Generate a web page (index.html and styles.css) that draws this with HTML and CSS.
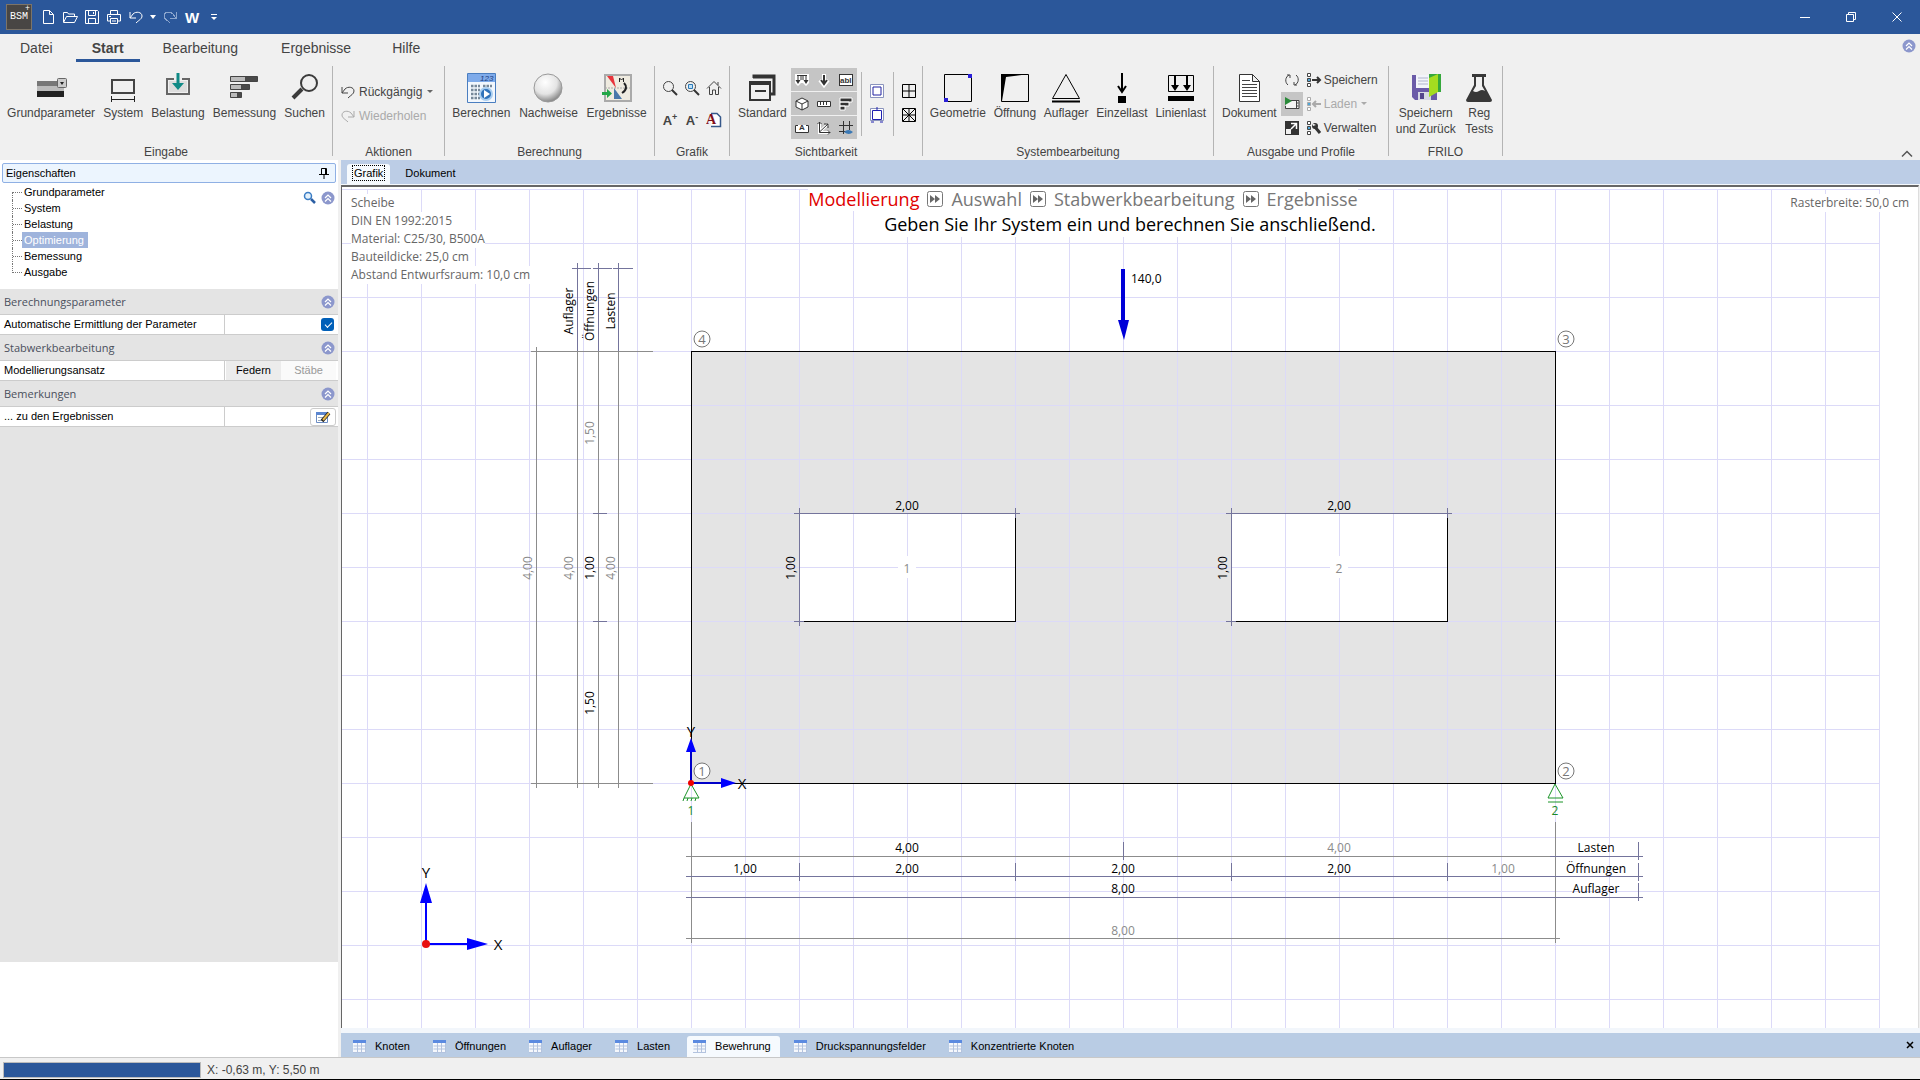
FILE: index.html
```
<!DOCTYPE html>
<html lang="de">
<head>
  <meta charset="utf-8">
  <title>BSM+</title>
  <link rel="stylesheet" href="styles.css">
</head>
<body>
  <!-- shared icons -->
  <svg class="sprite" aria-hidden="true">
    <symbol id="i-undo" viewBox="0 0 16 16"><path d="M2 3v6h6M2 9l3-4c3-3 9-2 9 2 0 3-3 4-6 7" fill="none" stroke="currentColor"/></symbol>
    <symbol id="i-redo" viewBox="0 0 16 16"><path d="M14 3v6H8M14 9l-3-4C8 2 2 3 2 7c0 3 3 4 6 7" fill="none" stroke="currentColor"/></symbol>
    <symbol id="i-up" viewBox="0 0 14 14"><circle cx="7" cy="7" r="6.500" fill="#8c97cc"/><path d="M4 7l3-3 3 3M4 10.500l3-3 3 3" fill="none" stroke="#fff" stroke-width="1.200"/></symbol>
    <symbol id="i-table" viewBox="0 0 14 14"><path d="M0 1h13v12H0z" fill="#f6f8fc"/><path d="M0 1h13v3H0z" fill="#5b8ae0"/><path d="M.5 7h12M.5 10h12M4.500 4v9M8.500 4v9M12.500 4v9M0 13.500h13" stroke="#b3c3de" fill="none"/></symbol>
    <symbol id="i-ff" viewBox="0 0 16 16"><rect x=".5" y=".5" width="15" height="15" rx="2" fill="#fff" stroke="#777"/><path d="M3 4l5 4-5 4zM8 4l5 4-5 4z" fill="#666"/></symbol>
    <symbol id="i-profile" viewBox="0 0 16 16"><path d="M1.500 1.500h3v3h-3zM1.500 11.500h3v3h-3z" fill="#fff" stroke="currentColor"/><path d="M1.500 6.500h3v3h-3z" fill="#4ea6d8" stroke="currentColor"/></symbol>
  </svg>

  <header class="titlebar">
    <div class="app-icon"><span>BSM</span><sup>+</sup></div>
    <div class="quick">
      <button aria-label="Neu"><svg width="16" height="16"><path d="M3.500 1.500h6l4 4v9h-10zM9.500 1.500v4h4" class="w"/></svg></button>
      <button aria-label="Öffnen"><svg width="16" height="16"><path d="M1.500 13V3.500h4l1 1.500h6v2.500M1.500 13.500l3-6h11l-3 6z" class="w"/></svg></button>
      <button aria-label="Speichern"><svg width="16" height="16"><path d="M1.500 1.500h12l1 1v12h-13zM4.500 1.500v5h7v-5M4.500 14.500v-5h7v5M9.500 3v2" class="w"/></svg></button>
      <button aria-label="Drucken"><svg width="16" height="16"><path d="M4.500 5V1.500h7V5M4.500 12h-3V5.500h13V12h-3M4.500 9.500h7v5h-7zM6 12h4M3 7.500h2" class="w"/></svg></button>
      <button aria-label="Rückgängig"><svg width="16" height="16"><use href="#i-undo"/></svg></button>
      <button class="slim" aria-label="Rückgängig-Liste"><svg width="6" height="4"><path d="M0 0h6L3 4z" fill="#fff"/></svg></button>
      <button class="dim" aria-label="Wiederholen"><svg width="16" height="16"><use href="#i-redo"/></svg></button>
      <button class="word">W</button>
      <button aria-label="Anpassen"><svg width="8" height="8"><path d="M1 1.500h6" stroke="#fff"/><path d="M1 4h6L4 7z" fill="#fff"/></svg></button>
    </div>
    <div class="window-buttons">
      <button aria-label="Minimieren"><svg width="12" height="12"><path d="M1 6.500h10" class="w"/></svg></button>
      <button aria-label="Wiederherstellen"><svg width="12" height="12"><path d="M1.500 3.500h7v7h-7zM3.500 3V1.500h7v7H9" class="w"/></svg></button>
      <button aria-label="Schließen"><svg width="12" height="12"><path d="M1.500 1.500l9 9M10.500 1.500l-9 9" class="w"/></svg></button>
    </div>
  </header>

  <nav class="menu">
    <button>Datei</button>
    <button class="active">Start</button>
    <button>Bearbeitung</button>
    <button class="wide">Ergebnisse</button>
    <button>Hilfe</button>
    <svg class="menu-up" width="14" height="14"><use href="#i-up"/></svg>
  </nav>

  <section class="ribbon">
    <div class="group g-eingabe">
      <div class="tools">
        <button class="big"><svg width="32" height="32"><path d="M2 9h27v6H2z" fill="#777"/><path d="M2 14h27v5H2z" fill="#bbb"/><path d="M2 19h27v6H2z" fill="#222"/><rect x="22.500" y="6.500" width="9" height="9" rx="1" fill="#ccc" stroke="#666"/><path d="M25 10h4l-2 3z" fill="#222"/></svg>Grundparameter</button>
        <button class="big"><svg width="32" height="32"><path d="M5 8h22v13H5z" fill="none" stroke="#444" stroke-width="2"/><path d="M4 27.500h24M4.500 24v6M27.500 24v6" stroke="#222"/></svg>System</button>
        <button class="big"><svg width="32" height="32"><path d="M12 7H5v15h22V7h-7" fill="none" stroke="#666" stroke-width="2"/><path d="M7 9h18v11H7z" fill="#ddd"/><path d="M14.500 1h3v10h4.500l-6 7-6-7h4.500z" fill="#108a86"/></svg>Belastung</button>
        <button class="big"><svg width="32" height="32"><path d="M2.500 4.500h27v5h-27zM2.500 12.500h19v5h-19zM2.500 20.500h11v5h-11z" fill="#4a4a4a" stroke="#444"/><path d="M3 5h14v4H3zM3 13h10v4H3zM3 21h6v4H3z" fill="#bbb"/></svg>Bemessung</button>
        <button class="big"><svg width="32" height="32"><circle cx="20" cy="11" r="8" fill="none" stroke="#3b3b3b" stroke-width="2"/><path d="M13 17L4 26" stroke="#3b3b3b" stroke-width="4"/></svg>Suchen</button>
      </div>
      <div class="caption">Eingabe</div>
    </div>

    <div class="group g-aktionen">
      <div class="tools rows">
        <button class="row"><svg width="16" height="16"><use href="#i-undo"/></svg>Rückgängig<svg class="caret" width="6" height="4"><path d="M0 0h6L3 3z" fill="#666"/></svg></button>
        <button class="row" disabled><svg width="16" height="16"><use href="#i-redo"/></svg>Wiederholen</button>
      </div>
      <div class="caption">Aktionen</div>
    </div>

    <div class="group g-berechnung">
      <div class="tools">
        <button class="big"><svg width="32" height="32"><path d="M2.500 1.500h28v29h-28z" fill="#f2f7fd" stroke="#4a7ec0"/><path d="M3 2h27v8H3z" fill="#7fabea"/><text x="15" y="9" class="num">123</text><path d="M6 14h9M6 18h9M6 22h9M6 26h9M18 14h9" stroke="#789" stroke-width="2.500" stroke-dasharray="2.500 1"/><circle cx="21" cy="22" r="6" fill="#2e72ba" stroke="#a8cdf0" stroke-width="2"/><path d="M19 18l6 4-6 4z" fill="#fff"/></svg>Berechnen</button>
        <button class="big"><svg width="32" height="32"><defs><radialGradient id="ball" cx=".4" cy=".3" r=".7"><stop offset="0" stop-color="#fff"/><stop offset=".6" stop-color="#e4e4e4"/><stop offset="1" stop-color="#888"/></radialGradient></defs><circle cx="16" cy="16" r="14" fill="url(#ball)" stroke="#999"/></svg>Nachweise</button>
        <button class="big"><svg width="32" height="32"><path d="M4 3h26v26H4z" fill="#efebe0" stroke="#aaa" stroke-width="2"/><path d="M4 16h26" stroke="#aaa" stroke-dasharray="2 1"/><path d="M6 4h6l3 12z" fill="#e8343c"/><path d="M13 16l8 11h-8z" fill="#4a78aa"/><path d="M23 11c3 3 3 7-2 10" fill="none" stroke="#222" stroke-width="2"/><path d="M18.500 10V6l2 2 2-2v4" fill="none" stroke="#222"/><path d="M1 20h5v-3l5 4.500-5 4.500v-3H1z" fill="#23a648"/></svg>Ergebnisse</button>
      </div>
      <div class="caption">Berechnung</div>
    </div>

    <div class="group g-grafik">
      <div class="tools icon-grid zoom-grid">
        <button aria-label="Zoom"><svg width="16" height="16"><circle cx="6.500" cy="6.500" r="5" class="k"/><path d="M10 10l5 5" class="k2"/></svg></button>
        <button aria-label="Zoom Fenster"><svg width="16" height="16"><circle cx="6.500" cy="6.500" r="5" class="k"/><path d="M10 10l5 5" class="k2"/><path d="M4.500 4.500h4v4h-4z" fill="#bfe0f5" stroke="#2a7ab8"/></svg></button>
        <button aria-label="Vollbild"><svg width="16" height="16"><path d="M1 8.500L8 1.500l7 7M3.500 7v7.500h3V10h3v4.500h3V7M12 5V2" class="k"/></svg></button>
        <button class="font">A<sup>+</sup></button>
        <button class="font">A<sup>-</sup></button>
        <button aria-label="Schrift"><svg width="16" height="16"><path d="M5 1.500h6l3.500 3.500v9.500H5" fill="#fff" stroke="#36588a" stroke-width="1.500"/><text x="0" y="12" class="red-a">A</text></svg></button>
      </div>
      <div class="caption">Grafik</div>
    </div>

    <div class="group g-sicht">
      <div class="tools">
        <button class="big"><svg width="32" height="32"><path d="M7 2h22v20H7z" fill="#f0f0f0"/><path d="M8 6V4h20v18h-3M7 5h21" fill="none" stroke="#333" stroke-width="3"/><path d="M4 10h20v18H4z" fill="#f0f0f0" stroke="#333" stroke-width="2"/><path d="M3 11h22" stroke="#333" stroke-width="4"/><path d="M9 19h11" stroke="#333" stroke-width="2"/></svg>Standard</button>
        <div class="toggles">
          <button aria-label="Lasten"><svg width="16" height="16"><path d="M1 2h14v9l-3 3-3-3H7l-3 3-3-3z" fill="#fff"/><path d="M3 3.500h10M4 3v7M12 3v7M7 4v4M9 4v4" class="t"/><path d="M1.500 8h5L4 12zM9.500 8h5L12 12z" fill="#333"/></svg></button>
          <button aria-label="Einzellasten"><svg width="16" height="16"><path d="M8 2v10M4 8l4 5 4-5" fill="none" stroke="#fff" stroke-width="4"/><path d="M8 3v8M5 8l3 4 3-4" class="t t2"/></svg></button>
          <button aria-label="Texte"><svg width="16" height="16"><rect x="1.500" y="2.500" width="13" height="11" fill="#fff" stroke="#333"/><text x="2" y="11" class="abl">abl</text></svg></button>
          <button aria-label="3D"><svg width="16" height="16"><path d="M8 2l6 3v6l-6 3-6-3V5z" fill="#fff"/><path d="M8 2l6 3v6l-6 3-6-3V5zM2 5l6 3 6-3M8 8v6" class="t"/></svg></button>
          <button aria-label="Bemaßung"><svg width="16" height="16"><path d="M1 5h14v6H1z" fill="#fff"/><path d="M1.500 5.500h13v5h-13zM4.500 6v3M7.500 6v3M10.500 6v3" class="t"/></svg></button>
          <button aria-label="Tabelle"><svg width="16" height="16"><path d="M2 2h12v4H2zM2 6h9v4H2zM2 10h5v4H2z" fill="#333" stroke="#fff"/></svg></button>
          <button aria-label="Beschriftung"><svg width="16" height="16"><path d="M1 5h14v8H1z" fill="#fff"/><path d="M4 5.500H1.500v7h13v-7H12" class="t"/><text x="5" y="10" class="abl">A</text></svg></button>
          <button aria-label="Achsen"><svg width="16" height="16"><path d="M3.500 2v10.500H14M3.500 12L12 4" fill="none" stroke="#fff" stroke-width="3"/><path d="M3.500 2v10.500H14M3.500 12L12 4M1.500 4l2-2 2 2M12 10.500l2 2-2 2M8 4h4v4" class="t"/></svg></button>
          <button aria-label="Raster"><svg width="16" height="16"><path d="M5.500 1v13M11.500 1v9M1 5.500h14M1 11.500h7" class="t"/><path d="M6 12q4-4 9 0-4 4-9 0z" fill="#3a78b4"/></svg></button>
        </div>
        <div class="pair">
          <button aria-label="System zoomen"><svg width="16" height="16"><path d="M1.500 1.500h13v13h-13z" fill="#fff" stroke="#8a93bd"/><path d="M4 4h8v8H4z" fill="none" stroke="#2020a0"/></svg></button>
          <button aria-label="Lager zoomen"><svg width="16" height="16"><path d="M1.500 1.500h13v12h-13z" fill="#fff" stroke="#8a93bd"/><path d="M3.500 3.500h9v9h-9zM8 0v4M2 15h3M11 15h3" fill="none" stroke="#2020b0"/></svg></button>
        </div>
        <div class="pair">
          <button aria-label="Raster an"><svg width="16" height="16"><path d="M1.500 1.500h13v13h-13zM8 1v14M1 8h14" class="b"/></svg></button>
          <button aria-label="Netz an"><svg width="16" height="16"><path d="M1.500 1.500h13v13h-13zM8 1v14M1 8h14M2 2l12 12M14 2L2 14" class="b"/></svg></button>
        </div>
      </div>
      <div class="caption">Sichtbarkeit</div>
    </div>

    <div class="group g-system">
      <div class="tools">
        <button class="big"><svg width="32" height="32"><path d="M2.500 2.500h27v27h-27z" class="b"/><path d="M26 2h4v4h-4zM2 26h4v4H2z" fill="#2a20d8"/></svg>Geometrie</button>
        <button class="big"><svg width="32" height="32"><path d="M2.500 2.500h27v27h-27z" class="b"/><path d="M2 2h28L7 5 3 29z"/></svg>Öffnung</button>
        <button class="big"><svg width="32" height="32"><path d="M2.500 26.500L16 2.500l13.500 24z" class="b"/><path d="M2 29.500h28" stroke="#000" stroke-width="2"/></svg>Auflager</button>
        <button class="big"><svg width="32" height="32"><path d="M16 1v18M12 14l4 6 4-6" fill="none" stroke="#000" stroke-width="2"/><path d="M12 24h8v7h-8z"/></svg>Einzellast</button>
        <button class="big"><svg width="32" height="32"><path d="M3.500 3.500h25v16h-25z" class="b"/><path d="M10 4v12M22 4v12" stroke="#000" stroke-width="2"/><path d="M6 13h8l-4 6zM18 13h8l-4 6z"/><path d="M3 24h26v5H3z"/></svg>Linienlast</button>
      </div>
      <div class="caption">Systembearbeitung</div>
    </div>

    <div class="group g-ausgabe">
      <div class="tools">
        <button class="big"><svg width="32" height="32"><path d="M6.500 2.500h13l7 7v20h-20zM19.500 2.500v7h7" fill="#fff" stroke="#333"/><path d="M9 8.500h8M9 12.500h15M9 15.500h15M9 18.500h15M9 21.500h15M9 24.500h15" stroke="#444"/></svg>Dokument</button>
        <div class="stack">
          <button aria-label="Aktualisieren"><svg width="16" height="16"><path d="M4 13A6 6 0 0 1 5 3M12 3a6 6 0 0 1-1 10M3 3h3v3M13 13h-3v-3" class="k"/></svg></button>
          <button class="on" aria-label="Vorschau"><svg width="16" height="16"><path d="M2 4h13v9H2z" fill="#f4f4f4"/><path d="M6 4.500h9v8H1.500V10M12.500 5v7M12.500 7h2M12.500 10h2" class="k"/><path d="M1 1l7 4-7 4z" fill="#2a8a3a"/></svg></button>
          <button aria-label="Fenster"><svg width="16" height="16"><path d="M1 1h14v14H1z" fill="#333"/><path d="M2 9h5v5H2z" fill="#f0f0f0"/><path d="M7 3.500h5.500V9M12 4L7 9" fill="none" stroke="#fff" stroke-width="1.500"/></svg></button>
        </div>
        <div class="profile">
          <button class="row"><svg width="16" height="16"><use href="#i-profile"/><path d="M6 8h8M11 5l3 3-3 3" class="k2"/></svg>Speichern</button>
          <button class="row" disabled><svg width="16" height="16"><use href="#i-profile"/><path d="M15 8H7M10 5L7 8l3 3" fill="none" stroke="#aaa" stroke-width="2"/></svg>Laden<svg class="caret" width="6" height="4"><path d="M0 0h6L3 3z" fill="#aaa"/></svg></button>
          <button class="row"><svg width="16" height="16"><use href="#i-profile"/><path d="M9 7l5 6" stroke="#333" stroke-width="3"/><circle cx="9" cy="6" r="3" fill="#333"/><path d="M6 3l4 2-3 1z" fill="#f0f0f0"/></svg>Verwalten</button>
        </div>
      </div>
      <div class="caption">Ausgabe und Profile</div>
    </div>

    <div class="group g-frilo">
      <div class="tools">
        <button class="big"><svg width="32" height="32"><path d="M2 3h25v25H5l-3-3z" fill="#6a5aa8"/><path d="M6 3h15v13H6z" fill="#f2f4fa"/><path d="M8 6h10M8 9h10M8 12h10" stroke="#b0b4cc"/><path d="M8 20h13v8H8z" fill="#d6d8e4"/><path d="M10 21h4v6h-4z" fill="#53458c"/><path d="M19 2h12v18h-12z" fill="#35a83c"/><path d="M19 6l9-4v18l-9 5z" fill="#a4dc20"/></svg>Speichern<br>und Zurück</button>
        <button class="big"><svg width="32" height="32"><path d="M9 2h14v3h-2v8l8 15q0 2-2 2H5q-2 0-2-2l8-15V5H9z" fill="#383838"/><path d="M13 5h6v9l3 5q-3-2-6 0t-6 0l3-5z" fill="#f0f0f0"/></svg>Reg<br>Tests</button>
      </div>
      <div class="caption">FRILO</div>
    </div>
    <svg class="ribbon-fold" width="12" height="8"><path d="M1 6.500l5-5 5 5" fill="none" stroke="#555" stroke-width="1.500"/></svg>
  </section>

  <main>
    <aside>
      <div class="panel-title">Eigenschaften<svg width="12" height="12"><path d="M3.500 7V1.500h5V7M1 7.500h10M6 8v4M7.500 2v5" fill="none" stroke="#000"/></svg></div>
      <div class="tree-box">
        <ul class="tree">
          <li><a href="#">Grundparameter</a></li>
          <li><a href="#">System</a></li>
          <li><a href="#">Belastung</a></li>
          <li><a href="#" class="selected">Optimierung</a></li>
          <li><a href="#">Bemessung</a></li>
          <li><a href="#">Ausgabe</a></li>
        </ul>
        <div class="tree-tools">
          <svg width="14" height="14"><circle cx="5" cy="5" r="3.500" fill="#e4f1fb" stroke="#3a7cc4" stroke-width="1.500"/><path d="M8 8l4 4" stroke="#2b5fa4" stroke-width="2.500"/></svg>
          <svg width="14" height="14"><use href="#i-up"/></svg>
        </div>
      </div>

      <div class="props">
        <h2>Berechnungsparameter<svg width="14" height="14"><use href="#i-up"/></svg></h2>
        <div class="prop">
          <label for="auto">Automatische Ermittlung der Parameter</label>
          <div class="value"><input type="checkbox" id="auto" checked></div>
        </div>
        <h2>Stabwerkbearbeitung<svg width="14" height="14"><use href="#i-up"/></svg></h2>
        <div class="prop">
          <span>Modellierungsansatz</span>
          <div class="value switch"><button class="on">Federn</button><button>Stäbe</button></div>
        </div>
        <h2>Bemerkungen<svg width="14" height="14"><use href="#i-up"/></svg></h2>
        <div class="prop">
          <span>... zu den Ergebnissen</span>
          <div class="value"><button class="edit" aria-label="Bearbeiten"><svg width="16" height="14"><path d="M1.500 2.500h11v10h-11z" fill="#fff" stroke="#6b8cc4"/><path d="M1 2h12v3H1z" fill="#5b86d0"/><path d="M3 7.500h6M3 10.500h5" stroke="#9ab"/><path d="M7 11l7-8" stroke="#222" stroke-width="3.500"/><path d="M8 10l6-7" stroke="#e8b84a" stroke-width="2"/></svg></button></div>
        </div>
      </div>
      <div class="help-box"></div>
    </aside>

    <div class="work">
      <div class="view-tabs">
        <button class="active"><span>Grafik</span></button>
        <button>Dokument</button>
      </div>

      <div class="canvas">
        <svg class="drawing" width="100%" height="100%">
          <defs>
            <pattern id="grid" width="54" height="54" patternUnits="userSpaceOnUse">
              <path d="M0 0h54v1H1v53H0z" fill="#dcdaf8"/>
            </pattern>
          </defs>
          <!-- origin is node 1, one grid cell (50 cm) is 54 units -->
          <g transform="translate(349 596)">
            <rect x="0" y="-432" width="864" height="432" fill="#e4e4e4"/>
            <rect x="108" y="-270" width="216" height="108" fill="#fff"/>
            <rect x="540" y="-270" width="216" height="108" fill="#fff"/>
            <rect x="-378" y="-594" width="1567" height="1400" fill="url(#grid)"/>
            <rect x="207" y="-227" width="18" height="22" fill="#fff"/>
            <rect x="639" y="-227" width="18" height="22" fill="#fff"/>
            <g class="outline">
              <rect x="0" y="-432" width="864" height="432"/>
              <path d="M108-162h216v-108M540-162h216v-108"/>
            </g>

            <!-- openings -->
            <path class="dim blue" d="M103-270h226M108-275v118M324-275v10M103-162h10M535-270h226M540-275v118M756-275v10M535-162h10"/>
            <g class="txt">
              <text x="216" y="-273">2,00</text>
              <text x="648" y="-273">2,00</text>
              <text transform="translate(104 -215) rotate(-90)">1,00</text>
              <text transform="translate(536 -215) rotate(-90)">1,00</text>
              <text class="grey" x="216" y="-210">1</text>
              <text class="grey" x="648" y="-210">2</text>
            </g>

            <!-- dimension chains left -->
            <path class="dim" d="M-155-436V5M-114-432V5M-93-432V5M-73-432V5M-160-432h122M-160 0h122"/>
            <path class="dim blue" d="M-114-520v88M-93-520v88M-73-520v88M-119-515h19M-98-515h19M-78-515h20M-98-270h14M-98-162h14"/>
            <g class="txt">
              <text transform="translate(-118 -472) rotate(-90)">Auflager</text>
              <text transform="translate(-97 -472) rotate(-90)">Öffnungen</text>
              <text transform="translate(-76 -472) rotate(-90)">Lasten</text>
              <text class="grey" transform="translate(-159 -215) rotate(-90)">4,00</text>
              <text class="grey" transform="translate(-118 -215) rotate(-90)">4,00</text>
              <text class="grey" transform="translate(-76 -215) rotate(-90)">4,00</text>
              <text class="grey" transform="translate(-97 -350) rotate(-90)">1,50</text>
              <text transform="translate(-97 -215) rotate(-90)">1,00</text>
              <text transform="translate(-97 -80) rotate(-90)">1,50</text>
            </g>

            <!-- dimension chains bottom -->
            <path class="dim" d="M0 39v121M864 39v121M-5 73h864M-5 155h874"/>
            <path class="dim blue" d="M-5 93h957M-5 114h957M859 73h93M432 59v18M108 80v18M324 80v18M540 80v18M756 80v18M947 59v18M947 80v18M947 100v18"/>
            <g class="txt">
              <text x="216" y="69">4,00</text>
              <text class="grey" x="648" y="69">4,00</text>
              <text x="54" y="90">1,00</text>
              <text x="216" y="90">2,00</text>
              <text x="432" y="90">2,00</text>
              <text x="648" y="90">2,00</text>
              <text class="grey" x="812" y="90">1,00</text>
              <text x="432" y="110">8,00</text>
              <text class="grey" x="432" y="152">8,00</text>
              <text x="905" y="69">Lasten</text>
              <text x="905" y="90">Öffnungen</text>
              <text x="905" y="110">Auflager</text>
            </g>

            <!-- point load -->
            <path d="M430-514h4v51h4l-5 20-6-20h3z" fill="#0000d8"/>
            <text class="txt start" x="440" y="-500">140,0</text>

            <!-- nodes -->
            <g class="node">
              <circle cx="11" cy="-12" r="8"/><text x="11" y="-7">1</text>
              <circle cx="875" cy="-12" r="8"/><text x="875" y="-7">2</text>
              <circle cx="875" cy="-444" r="8"/><text x="875" y="-439">3</text>
              <circle cx="11" cy="-444" r="8"/><text x="11" y="-439">4</text>
            </g>

            <!-- supports -->
            <g class="support">
              <path d="M0 1L-7 15H8zM-7 15l-1 3M-3 15l-1 3M1 15l-1 3M5 15l-1 3M864 1l-7 14h15zM857 19h15"/>
              <text x="0" y="32">1</text>
              <text x="864" y="32">2</text>
            </g>

            <!-- local axes -->
            <path d="M0 0v-36M0 0h36" stroke="#0000c8" stroke-width="2"/>
            <path d="M-5-31H5L0-45zM30-5v10l15-5z" fill="#00f"/>
            <circle r="3" fill="#e00"/>
            <text class="axis" x="0" y="-46">Y</text>
            <text class="axis" x="51" y="6">X</text>

            <!-- coordinate cross -->
            <path d="M-265 161v-46M-265 161h48" stroke="#00f" stroke-width="2"/>
            <path d="M-271 120h12l-6-20zM-224 155v12l21-6z" fill="#00f"/>
            <circle cx="-265" cy="161" r="4" fill="#e81010"/>
            <text class="axis" x="-265" y="95">Y</text>
            <text class="axis" x="-193" y="167">X</text>
          </g>
        </svg>

        <div class="info">
          <span>Scheibe</span>
          <span>DIN EN 1992:2015</span>
          <span>Material: C25/30, B500A</span>
          <span>Bauteildicke: 25,0 cm</span>
          <span>Abstand Entwurfsraum: 10,0 cm</span>
        </div>
        <div class="steps">
          <div class="step-line">
            <span class="current">Modellierung</span><svg width="16" height="16"><use href="#i-ff"/></svg>
            <span>Auswahl</span><svg width="16" height="16"><use href="#i-ff"/></svg>
            <span>Stabwerkbearbeitung</span><svg width="16" height="16"><use href="#i-ff"/></svg>
            <span>Ergebnisse</span>
          </div>
          <p>Geben Sie Ihr System ein und berechnen Sie anschließend.</p>
        </div>
        <div class="raster">Rasterbreite: 50,0 cm</div>
      </div>

      <div class="table-tabs">
        <button><svg width="14" height="14"><use href="#i-table"/></svg>Knoten</button>
        <button><svg width="14" height="14"><use href="#i-table"/></svg>Öffnungen</button>
        <button><svg width="14" height="14"><use href="#i-table"/></svg>Auflager</button>
        <button><svg width="14" height="14"><use href="#i-table"/></svg>Lasten</button>
        <button class="active"><svg width="14" height="14"><use href="#i-table"/></svg>Bewehrung</button>
        <button><svg width="14" height="14"><use href="#i-table"/></svg>Druckspannungsfelder</button>
        <button><svg width="14" height="14"><use href="#i-table"/></svg>Konzentrierte Knoten</button>
        <button class="close" aria-label="Schließen"><svg width="8" height="8"><path d="M1 1l6 6M7 1L1 7" stroke="#000" stroke-width="1.500"/></svg></button>
      </div>
    </div>
  </main>

  <footer>
    <div class="progress"></div>
    <span>X: -0,63 m, Y: 5,50 m</span>
  </footer>
</body>
</html>
```

FILE: styles.css
```
* {
  box-sizing: border-box;
}

body {
  margin: 0;
  height: 100vh;
  display: flex;
  flex-direction: column;
  overflow: hidden;
  background: #f0f0f0;
  color: #444;
  font-family: "Liberation Sans", Arial, sans-serif;
  font-size: 12px;
}

button {
  padding: 0;
  border: none;
  background: none;
  color: inherit;
  font: inherit;
}

svg {
  display: block;
  flex: none;
}

.sprite {
  position: absolute;
  width: 0;
  height: 0;
}

/* icon strokes */
.w { fill: none; stroke: #fff; }
.k { fill: none; stroke: #444; }
.k2 { fill: none; stroke: #333; stroke-width: 2; }
.b { fill: none; stroke: #000; }
.t { stroke: #333; fill: none; }
.t2 { stroke-width: 2; }
.num { font-size: 8px; font-style: italic; fill: #1c3c80; }
.abl { font-size: 8px; font-weight: bold; fill: #333; }
.red-a { font-family: "Liberation Serif", serif; font-size: 14px; font-weight: bold; fill: #801018; }

/* title bar */
.titlebar {
  display: flex;
  align-items: center;
  height: 34px;
  padding-left: 6px;
  background: #2b579a;
  color: #fff;
}
.app-icon {
  position: relative;
  width: 26px;
  height: 26px;
  margin-right: 5px;
  border: 1px solid #7c7468;
  background: #484644;
  font-family: "Liberation Mono", monospace;
  font-size: 10px;
  line-height: 24px;
  text-align: center;
}
.app-icon sup {
  position: absolute;
  right: 1px;
  top: 0;
  line-height: 8px;
}
.quick {
  display: flex;
}
.quick button {
  display: flex;
  justify-content: center;
  align-items: center;
  width: 22px;
  height: 24px;
}
.quick .slim {
  width: 12px;
}
.quick .dim {
  color: #8ba5cd;
}
.quick .word {
  font-size: 15px;
  font-weight: bold;
}
.window-buttons {
  display: flex;
  margin-left: auto;
}
.window-buttons button {
  display: flex;
  justify-content: center;
  width: 46px;
}

/* menu */
.menu {
  display: flex;
  gap: 7px;
  height: 28px;
  padding: 0 4px;
  font-size: 14px;
}
.menu button {
  padding: 2px 16px 0;
  border-bottom: 3px solid transparent;
}
.menu .active {
  border-bottom-color: #2b579a;
  font-weight: bold;
}
.menu .wide {
  padding: 2px 18px 0 20px;
}
.menu-up {
  margin: 5px 0 0 auto;
}

/* ribbon */
.ribbon {
  position: relative;
  display: flex;
  height: 98px;
  padding-top: 4px;
}
.group {
  display: flex;
  flex-direction: column;
  height: 90px;
  border-right: 1px solid #b4b4b4;
}
.g-eingabe { width: 333px; }
.g-aktionen { width: 112px; }
.g-berechnung { width: 210px; }
.g-grafik { width: 75px; }
.g-sicht { width: 193px; }
.g-system { width: 291px; }
.g-ausgabe { width: 175px; }
.g-frilo { width: 114px; }
.tools {
  display: flex;
  flex: 1;
  justify-content: space-around;
  align-items: flex-start;
  padding: 0 3px;
}
.caption {
  height: 14px;
  margin-bottom: -3px;
  line-height: 14px;
  text-align: center;
}
.big {
  display: flex;
  flex-direction: column;
  align-items: center;
  padding-top: 6px;
  line-height: 16px;
  text-align: center;
}
.big svg {
  margin-bottom: 1px;
}
.rows {
  flex-direction: column;
  justify-content: flex-start;
  padding: 14px 7px 0;
}
.row {
  display: flex;
  align-items: center;
  gap: 3px;
  height: 24px;
}
.row:disabled {
  color: #aaa;
}
.caret {
  margin-left: 2px;
}
.icon-grid {
  display: grid;
  grid-template-columns: repeat(3, 22px);
  grid-auto-rows: 32px;
  justify-content: center;
  padding-top: 6px;
}
.icon-grid button {
  display: flex;
  justify-content: center;
  align-items: center;
  height: 32px;
}
.font {
  font-size: 13px;
  font-weight: bold;
}
.font sup {
  margin-bottom: 6px;
  font-size: 9px;
  line-height: 9px;
}
.toggles {
  display: grid;
  grid-template-columns: repeat(3, 22px);
  grid-auto-rows: 23px;
  row-gap: 1px;
  margin-top: 2px;
}
.toggles button {
  display: flex;
  justify-content: center;
  align-items: center;
  background: #c5c5c5;
}
.pair {
  display: flex;
  flex-direction: column;
  gap: 8px;
  width: 28px;
  height: 64px;
  margin-top: 6px;
  padding: 11px 0 0 7px;
  border-left: 1px solid #b4b4b4;
}
.g-sicht .tools {
  justify-content: flex-start;
  gap: 4px;
  padding: 0 0 0 8px;
}
.g-ausgabe .tools {
  justify-content: flex-start;
  padding-left: 8px;
}
.stack {
  margin-left: 4px;
  padding-top: 2px;
}
.stack button {
  display: flex;
  justify-content: center;
  align-items: center;
  width: 22px;
  height: 24px;
}
.stack .on {
  background: #c5c5c5;
}
.profile {
  margin-left: 3px;
  padding-top: 2px;
}
.profile .row {
  gap: 2px;
}
.ribbon-fold {
  margin: 84px 7px 0 auto;
}

/* properties panel */
main {
  display: flex;
  flex: 1;
  min-height: 0;
}
aside {
  display: flex;
  flex-direction: column;
  width: 338px;
  margin-right: 3px;
  background: #fff;
  color: #000;
  font-size: 11px;
}
.panel-title {
  display: flex;
  justify-content: space-between;
  align-items: center;
  height: 20px;
  margin: 3px 2px 0;
  padding: 0 5px 0 3px;
  border: 1px solid #8fb0e4;
  border-radius: 2px;
  background: #ecf5fe;
}
.tree-box {
  display: flex;
  justify-content: space-between;
  height: 106px;
}
.tree {
  margin: 1px 0 0 12px;
  padding: 0;
  list-style: none;
}
.tree li {
  display: flex;
  align-items: center;
  height: 16px;
}
/* dotted connector lines */
.tree li::before {
  content: "";
  width: 9px;
  height: 16px;
  border-left: 1px dotted #777;
  background: repeating-linear-gradient(90deg, #777 0 1px, #fff 1px 2px) 0 8px / 9px 1px no-repeat;
}
.tree li:first-child::before {
  height: 8px;
  margin-top: 8px;
  background-position: 0 0;
}
.tree li:last-child::before {
  height: 9px;
  margin-bottom: 7px;
}
.tree a {
  padding: 0 4px 0 2px;
  color: #000;
  line-height: 16px;
  text-decoration: none;
}
.tree .selected {
  background: #9fb4dc;
  color: #fff;
}
.tree-tools {
  display: flex;
  gap: 4px;
  padding: 8px 3px 0 0;
}
.props {
  flex: 1;
  background: #e4e4e4;
}
.props h2 {
  display: flex;
  justify-content: space-between;
  align-items: center;
  height: 25px;
  margin: 0;
  padding: 0 3px 0 4px;
  color: #4a4f5c;
  font-family: "Open Sans", sans-serif;
  font-size: 11px;
  font-weight: 500;
}
.prop {
  display: grid;
  grid-template-columns: 224px 1fr;
  height: 21px;
  border-top: 1px solid #ccc;
  border-bottom: 1px solid #ccc;
  background: #fff;
  line-height: 19px;
}
.prop > :first-child {
  padding-left: 4px;
}
.value {
  display: flex;
  justify-content: flex-end;
  align-items: center;
  padding-right: 4px;
  border-left: 1px solid #ccc;
}
.value input {
  position: relative;
  width: 13px;
  height: 13px;
  margin: 0;
  border-radius: 3px;
  background: #005fb8;
  appearance: none;
}
.value input:checked::after {
  content: "";
  position: absolute;
  left: 4px;
  top: 4px;
  width: 6px;
  height: 3px;
  border: solid #fff;
  border-width: 0 0 1px 1px;
  transform: rotate(-45deg);
}
.switch {
  padding: 0 2px 0 1px;
}
.switch button {
  flex: 1;
  height: 19px;
  background: #fafafa;
  color: #999;
}
.switch .on {
  background: #ececec;
  color: #000;
}
.value .edit {
  margin-right: -2px;
  padding: 1px 4px;
  border: 1px solid #ccc;
  border-radius: 3px;
}
.help-box {
  height: 95px;
}

/* work area */
.work {
  display: flex;
  flex: 1;
  flex-direction: column;
  min-width: 0;
  color: #000;
  font-size: 11px;
}
.view-tabs {
  display: flex;
  gap: 4px;
  height: 25px;
  padding: 4px 6px 0;
  border-bottom: 1px solid #f4f8fc;
  background: #bccde6;
}
.view-tabs button {
  padding: 0 11px 2px;
}
.view-tabs .active {
  padding: 0 5px 2px;
  border-radius: 3px 3px 0 0;
  background: #f6fafe;
}
.view-tabs .active span {
  display: block;
  padding: 1px;
  border: 1px dotted #000;
}
.canvas {
  position: relative;
  flex: 1;
  min-height: 0;
  margin-right: 1px;
  border-top: 2px solid #666;
  border-left: 1px solid #666;
  border-right: 1px solid #ddd;
  background: #fff;
  overflow: hidden;
  font-family: "Open Sans", sans-serif;
}
.drawing {
  position: absolute;
  inset: 0;
}
.outline {
  fill: none;
  stroke: #000;
  shape-rendering: crispEdges;
}
.dim {
  fill: none;
  stroke: #8c8c8c;
  shape-rendering: crispEdges;
}
.blue {
  stroke: #74749c;
}
.txt {
  font-size: 12px;
  text-anchor: middle;
}
.start {
  text-anchor: start;
}
.grey {
  fill: #8a8a8a;
}
.node {
  font-size: 13px;
  text-anchor: middle;
}
.node circle {
  fill: #fff;
  stroke: #777;
}
.node text {
  fill: #777;
}
.support {
  font-size: 12px;
  text-anchor: middle;
}
.support path {
  fill: none;
  stroke: #1a9428;
}
.support text {
  fill: #1a8a28;
}
.axis {
  font-size: 15px;
  text-anchor: middle;
}
.info {
  position: absolute;
  left: 9px;
  top: 7px;
  display: flex;
  flex-direction: column;
  align-items: flex-start;
  color: #666;
  font-size: 12px;
  line-height: 18px;
}
.info span,
.raster {
  background: #fff;
}
.raster {
  position: absolute;
  right: 9px;
  top: 7px;
  color: #666;
  font-size: 12px;
  line-height: 18px;
}
.steps {
  position: absolute;
  top: 0;
  left: 0;
  right: 0;
  display: flex;
  flex-direction: column;
  align-items: center;
}
.step-line {
  display: flex;
  align-items: center;
  gap: 8px;
  margin-right: 94px;
  background: #fff;
  color: #777;
  font-size: 18px;
  line-height: 24px;
}
.current {
  color: #e00000;
}
.steps p {
  margin: 0;
  background: #fff;
  font-size: 18px;
  line-height: 26px;
}

/* table tabs */
.table-tabs {
  display: flex;
  gap: 8px;
  height: 29px;
  padding: 3px 6px 0;
  border-top: 5px solid #f2f6fb;
  background: #b9cce4;
}
.table-tabs button {
  display: flex;
  align-items: center;
  gap: 8px;
  padding: 0 9px 2px 6px;
  border-radius: 3px 3px 0 0;
}
.table-tabs .active {
  background: #f6fafe;
}
.table-tabs .close {
  margin-left: auto;
  padding: 0 0 4px;
}

footer {
  display: flex;
  align-items: center;
  gap: 6px;
  height: 23px;
  padding: 2px 3px 0;
  border-top: 1px solid #c8c8c8;
  border-bottom: 1px solid #000;
}
.progress {
  width: 198px;
  height: 16px;
  border: 1px solid #bbb;
  background: #2b579a;
}
```
